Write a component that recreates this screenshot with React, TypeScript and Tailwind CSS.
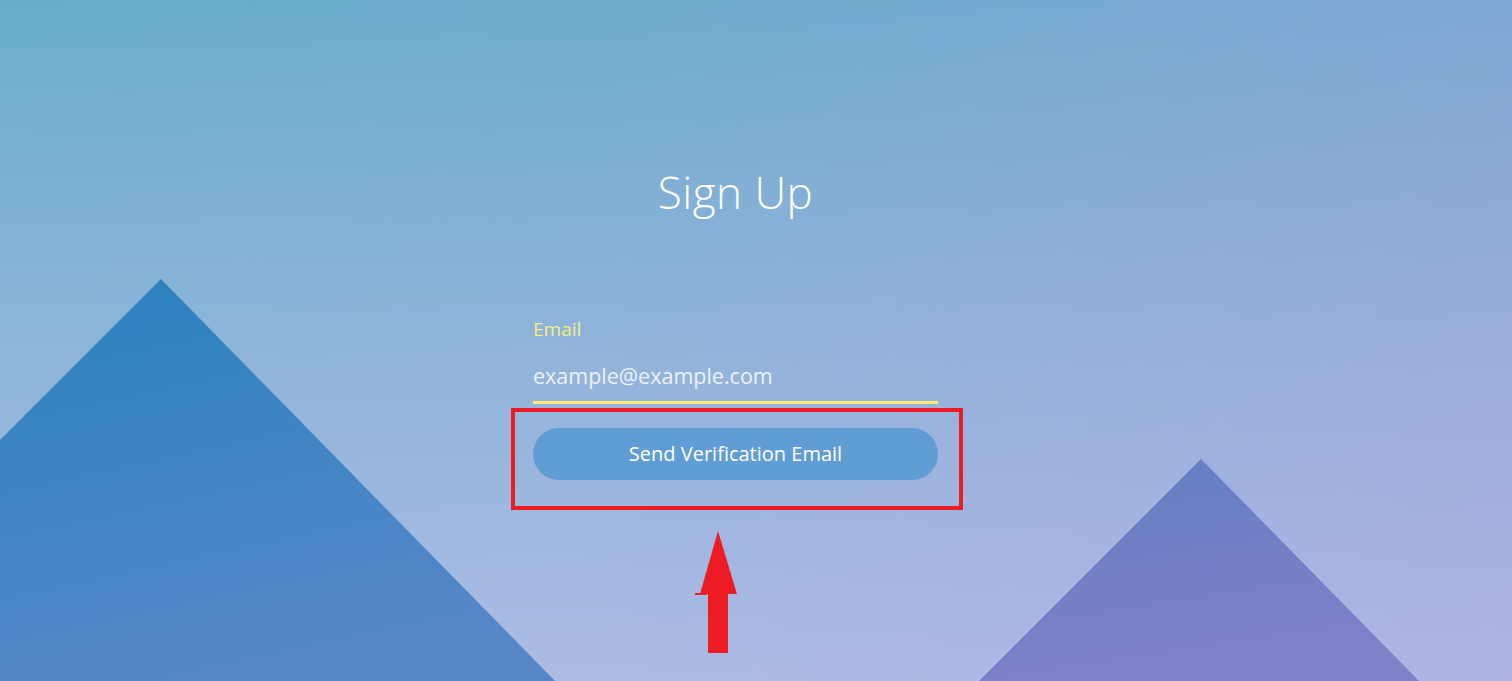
import React from "react";

export default function App() {
  return (
    <div
      className="relative w-full h-[681px] overflow-hidden bg-[linear-gradient(to_right,rgba(190,150,225,0)_0%,rgba(190,150,225,0.05)_40%,rgba(190,150,225,0.25)_100%),linear-gradient(to_bottom,#69adce_0%,#8db5da_50%,#abbde4_100%)]"
      style={{ fontFamily: '"Segoe UI", "Open Sans", "Noto Sans", sans-serif' }}
    >
      {/* decorative triangles */}
      <svg className="absolute left-0 top-0" width="1512" height="681" viewBox="0 0 1512 681">
        <defs>
          <linearGradient id="lt" x1="0" y1="0" x2="0.3" y2="1">
            <stop offset="0" stopColor="#2a82bd" />
            <stop offset="1" stopColor="#5587c8" />
          </linearGradient>
          <linearGradient id="rt" x1="0" y1="0" x2="0.3" y2="1">
            <stop offset="0" stopColor="#6280c2" />
            <stop offset="1" stopColor="#8080c9" />
          </linearGradient>
        </defs>
        <polygon points="161,279 555,681 0,681 0,440" fill="url(#lt)" />
        <polygon points="1201,459 1419,681 979,681" fill="url(#rt)" />
      </svg>

      <div className="relative flex justify-center pr-[41px]">
        <div className="w-[405px] flex flex-col">
          <h1 className="text-center text-[44px] font-light text-white leading-none pt-[170px] tracking-[0.5px]">
            Sign Up
          </h1>
          <label className="mt-[106px] text-[19px] leading-none text-[#f6ef7c]">Email</label>
          <div className="mt-[26px] border-b-[3px] border-[#fde97a] pb-[14px] text-[21.5px] leading-none text-[#eef2fb]">
            example@example.com
          </div>
          <div className="relative mt-[24px]">
            <button className="w-full h-[52px] rounded-full bg-[#5f9dd4] text-white text-[20px] leading-none">
              Send Verification Email
            </button>
            <div className="absolute left-[-22px] top-[-20px] w-[452px] h-[102px] border-4 border-[#ed1c24]" />
          </div>
        </div>
      </div>

      {/* red arrow annotation */}
      <svg className="absolute left-[694px] top-[530px]" width="46" height="125" viewBox="0 0 46 125">
        <polygon points="24,1 43,64 6,64" fill="#ed1c24" />
        <rect x="1" y="63" width="12" height="2" fill="#ed1c24" />
        <rect x="14" y="62" width="20" height="61" rx="1" fill="#ed1c24" />
      </svg>
    </div>
  );
}
